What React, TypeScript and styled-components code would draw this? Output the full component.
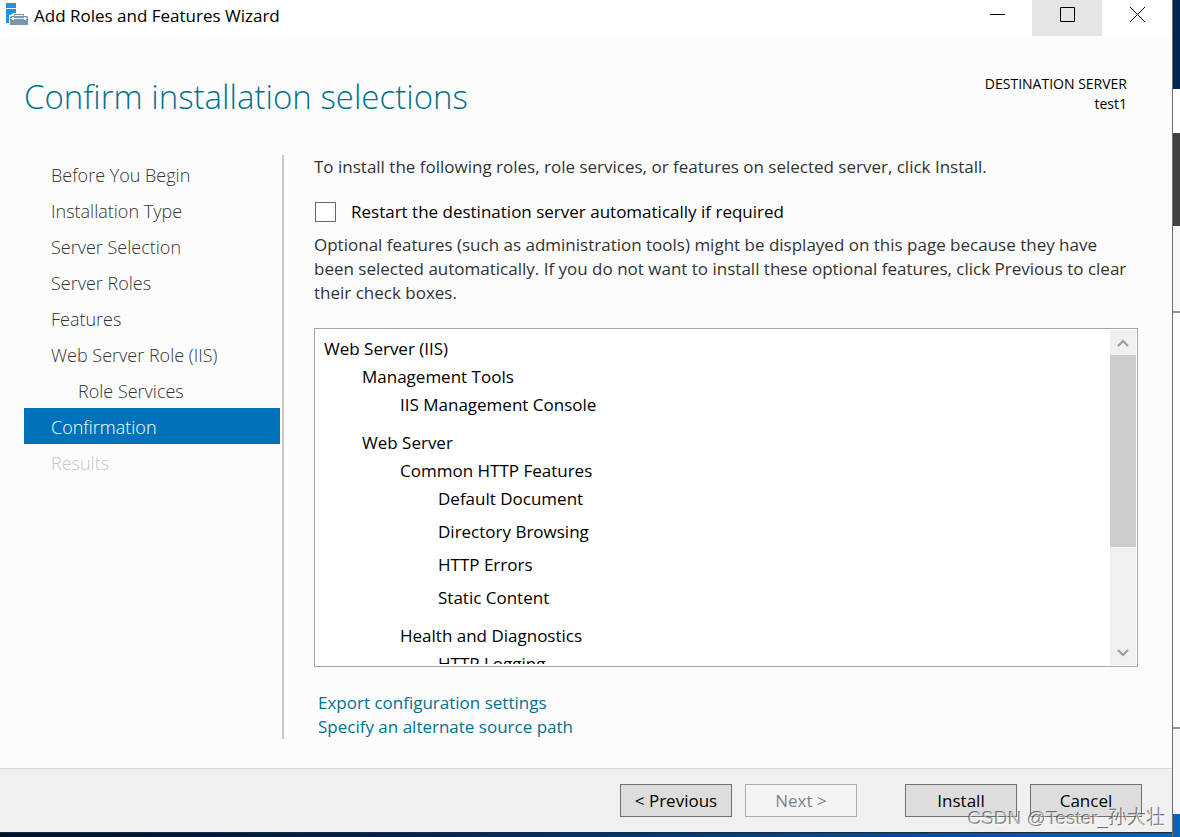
import React from "react";
import styled, { createGlobalStyle, css } from "styled-components";

const GlobalStyle = createGlobalStyle`
  * { box-sizing: border-box; }
  body {
    margin: 0;
    font-family: "Open Sans", "Noto Sans", "Noto Sans CJK SC", sans-serif;
    font-size: 17px;
    line-height: 24px;
    color: #000;
  }
  h1, p, ul { margin: 0; padding: 0; }
  ul { list-style: none; }
  button { font: inherit; color: inherit; padding: 0; }
`;

const Desktop = styled.div`
  position: relative;
  display: grid;
  grid-template-columns: minmax(0, 1fr) 8px;
  min-height: 100vh;
  background: #fafafa;
`;

const WindowColumn = styled.div`
  display: flex;
  flex-direction: column;
  padding-bottom: 4px;
  background: linear-gradient(90deg, #00102b, #002350 35%, #00509c 80%, #0063b8);
`;

const Window = styled.main`
  flex: 1;
  display: flex;
  flex-direction: column;
  background: #fcfcfc;
  border-bottom: 1px solid #1c2a3c;
`;

const Behind = styled.div`
  display: flex;
  flex-direction: column;
  border-left: 1px solid #6e6e6e;
`;

const Strip = styled.div<{ $height?: number; $color: string; $line?: boolean }>`
  ${(p) => (p.$height ? `height: ${p.$height}px;` : "flex: 1;")}
  background: ${(p) => p.$color};
  ${(p) => p.$line && "border-bottom: 2px solid #959595;"}
`;

const TitleBar = styled.header`
  display: flex;
  height: 37px;
  padding-left: 6px;
  background: #fff;
`;

const TitleIcon = styled.svg`
  width: 22px;
  height: 22px;
  margin-top: 3px;
`;

const TitleText = styled.span`
  flex: 1;
  margin: 4px 0 0 6px;
`;

const CaptionButton = styled.button<{ $active?: boolean }>`
  width: 70px;
  height: 36px;
  border: 0;
  background: ${(p) => (p.$active ? "#e5e5e5" : "transparent")};
  display: flex;
  justify-content: center;
  padding-top: 7px;
`;

const Header = styled.div`
  display: flex;
  justify-content: space-between;
  align-items: flex-start;
  padding: 34px 45px 0 24px;
`;

const Heading = styled.h1`
  font-size: 33px;
  line-height: 52px;
  font-weight: 300;
  color: #00728f;
`;

const Destination = styled.div`
  padding-top: 3px;
  font-size: 14px;
  line-height: 20px;
  text-align: right;
`;

const Content = styled.div`
  flex: 1;
  display: flex;
  padding: 32px 34px 29px 24px;
`;

const Steps = styled.nav`
  width: 260px;
  padding: 1px 2px 0 0;
  border-right: 2px solid #c9c9c9;
`;

const Step = styled.a<{ $nested?: boolean; $state?: "current" | "disabled" }>`
  display: block;
  height: 36px;
  padding-left: ${(p) => (p.$nested ? 54 : 27)}px;
  font-size: 18px;
  line-height: 38px;
  font-weight: 300;
  text-decoration: none;
  color: #333;
  ${(p) => p.$state === "current" && css`background: #0072bc; color: #fff;`}
  ${(p) => p.$state === "disabled" && css`color: #c6c6c6;`}
`;

const Panel = styled.section`
  flex: 1;
  min-width: 0;
  display: flex;
  flex-direction: column;
  padding-left: 30px;
`;

const Text = styled.p`
  color: #333;
`;

const CheckRow = styled.label`
  display: flex;
  align-items: center;
  gap: 15px;
  margin: 21px 0 9px 1px;
`;

const CheckBox = styled.input`
  appearance: none;
  width: 21px;
  height: 20px;
  margin: 0;
  border: 1px solid #666;
  background: #fff;
`;

const ListBox = styled.div`
  display: flex;
  height: 339px;
  margin-top: 23px;
  border: 1px solid #a5a5a5;
  background: #fff;
  padding: 1px;
`;

const Tree = styled.div`
  flex: 1;
  margin-bottom: 1px;
  padding: 7px 8px 0;
  overflow: hidden;
`;

const Branch = styled.ul`
  padding: 4px 0 0 38px;
`;

const Item = styled.li<{ $kind: "leaf" | "group" }>`
  padding-bottom: ${(p) => (p.$kind === "leaf" ? 9 : 5)}px;
`;

const ScrollTrack = styled.div`
  width: 26px;
  display: flex;
  flex-direction: column;
  background: #f0f0f0;
`;

const ScrollThumb = styled.div`
  height: 192px;
  background: #cdcdcd;
`;

const ScrollButton = styled.button<{ $end?: boolean }>`
  display: flex;
  align-items: center;
  justify-content: center;
  height: 25px;
  border: 0;
  background: #f0f0f0;
  ${(p) => p.$end && "margin-top: auto;"}
`;

const Links = styled.div`
  display: flex;
  flex-direction: column;
  align-items: flex-start;
  margin: 24px 0 0 4px;
`;

const TextLink = styled.a`
  color: #00728f;
  text-decoration: none;
`;

const Footer = styled.footer`
  display: flex;
  justify-content: flex-end;
  gap: 13px;
  height: 64px;
  padding: 15px 30px 0 0;
  border-top: 1px solid #d9d9d9;
  background: #f0f0f0;
`;

const PushButton = styled.button<{ $spaced?: boolean }>`
  width: 112px;
  height: 33px;
  margin-left: ${(p) => (p.$spaced ? 35 : 0)}px;
  border: 1px solid #707070;
  background: #ddd;
  &:disabled {
    border-color: #adadad;
    background: #f4f4f4;
    color: #838383;
  }
`;

const Watermark = styled.span`
  position: absolute;
  right: 14px;
  bottom: 5px;
  font-family: "Liberation Sans", "Noto Sans CJK SC", sans-serif;
  font-size: 19px;
  line-height: 26px;
  color: rgba(255, 255, 255, 0.5);
  text-shadow: -1px -1px 0 rgba(80, 80, 80, 0.8);
  pointer-events: none;
`;

type Node = { name: string; children?: Node[] };

const features: Node[] = [
  {
    name: "Web Server (IIS)",
    children: [
      { name: "Management Tools", children: [{ name: "IIS Management Console" }] },
      {
        name: "Web Server",
        children: [
          {
            name: "Common HTTP Features",
            children: [
              { name: "Default Document" },
              { name: "Directory Browsing" },
              { name: "HTTP Errors" },
              { name: "Static Content" },
            ],
          },
          { name: "Health and Diagnostics", children: [{ name: "HTTP Logging" }] },
        ],
      },
    ],
  },
];

function TreeItems({ nodes }: { nodes: Node[] }) {
  return (
    <>
      {nodes.map((n) => (
        <Item key={n.name} $kind={n.children ? "group" : "leaf"}>
          <div>{n.name}</div>
          {n.children && (
            <Branch>
              <TreeItems nodes={n.children} />
            </Branch>
          )}
        </Item>
      ))}
    </>
  );
}

const steps: { label: string; nested?: boolean; state?: "current" | "disabled" }[] = [
  { label: "Before You Begin" },
  { label: "Installation Type" },
  { label: "Server Selection" },
  { label: "Server Roles" },
  { label: "Features" },
  { label: "Web Server Role (IIS)" },
  { label: "Role Services", nested: true },
  { label: "Confirmation", state: "current" },
  { label: "Results", state: "disabled" },
];

function Chevron({ down }: { down?: boolean }) {
  return (
    <svg width="12" height="8" viewBox="0 0 12 8" fill="none" stroke="#9b9b9b" strokeWidth="2">
      <path d={down ? "M1 1l5 5 5-5" : "M1 7l5-5 5 5"} />
    </svg>
  );
}

export default function App() {
  return (
    <>
      <GlobalStyle />
      <Desktop>
        <WindowColumn>
          <Window>
            <TitleBar>
              <TitleIcon viewBox="0 0 22 22" aria-hidden="true">
                <path fill="#2490df" d="M0 0h10v5H0zM0 6h10v4H7l-2 2H3v8H0z" />
                <path fill="none" stroke="#7897ab" d="M8.500 13v-1.500h9v1.500" />
                <path fill="#7897ab" d="M5 13h16l1 1v8H4v-8z" />
                <path stroke="#e4ecf1" fill="none" d="M5 15.500h16" />
                <path stroke="#fff" strokeWidth="2" d="M7 14v3M19 14v3" />
              </TitleIcon>
              <TitleText>Add Roles and Features Wizard</TitleText>
              <CaptionButton aria-label="Minimize">
                <svg width="15" height="15"><path d="M0 7.500h15" stroke="#000" /></svg>
              </CaptionButton>
              <CaptionButton aria-label="Maximize" $active>
                <svg width="15" height="15"><path d="M.5.500h14v14H.5z" stroke="#000" fill="none" /></svg>
              </CaptionButton>
              <CaptionButton aria-label="Close">
                <svg width="15" height="15"><path d="M0 0l15 15M15 0L0 15" stroke="#000" /></svg>
              </CaptionButton>
            </TitleBar>
            <Header>
              <Heading>Confirm installation selections</Heading>
              <Destination>
                <div>DESTINATION SERVER</div>
                <div>test1</div>
              </Destination>
            </Header>
            <Content>
              <Steps>
                {steps.map((s) => (
                  <Step key={s.label} href="#" $nested={s.nested} $state={s.state}>
                    {s.label}
                  </Step>
                ))}
              </Steps>
              <Panel>
                <Text>
                  To install the following roles, role services, or features on selected server, click Install.
                </Text>
                <CheckRow>
                  <CheckBox type="checkbox" />
                  Restart the destination server automatically if required
                </CheckRow>
                <Text>
                  Optional features (such as administration tools) might be displayed on this page because they have
                  been selected automatically. If you do not want to install these optional features, click Previous to
                  clear their check boxes.
                </Text>
                <ListBox>
                  <Tree>
                    <ul>
                      <TreeItems nodes={features} />
                    </ul>
                  </Tree>
                  <ScrollTrack>
                    <ScrollButton aria-label="Scroll up"><Chevron /></ScrollButton>
                    <ScrollThumb />
                    <ScrollButton aria-label="Scroll down" $end><Chevron down /></ScrollButton>
                  </ScrollTrack>
                </ListBox>
                <Links>
                  <TextLink href="#">Export configuration settings</TextLink>
                  <TextLink href="#">Specify an alternate source path</TextLink>
                </Links>
              </Panel>
            </Content>
            <Footer>
              <PushButton>&lt; Previous</PushButton>
              <PushButton disabled>Next &gt;</PushButton>
              <PushButton $spaced>Install</PushButton>
              <PushButton>Cancel</PushButton>
            </Footer>
          </Window>
        </WindowColumn>
        <Behind>
          <Strip $height={89} $color="#002752" />
          <Strip $height={44} $color="#fff" />
          <Strip $height={93} $color="#434343" />
          <Strip $height={87} $color="#f7f7f7" $line />
          <Strip $color="#fdfdfd" $line />
          <Strip $height={85} $color="#f7f7f7" />
          <Strip $height={23} $color="#0065bb" />
        </Behind>
        <Watermark>CSDN @Tester_孙大壮</Watermark>
      </Desktop>
    </>
  );
}
